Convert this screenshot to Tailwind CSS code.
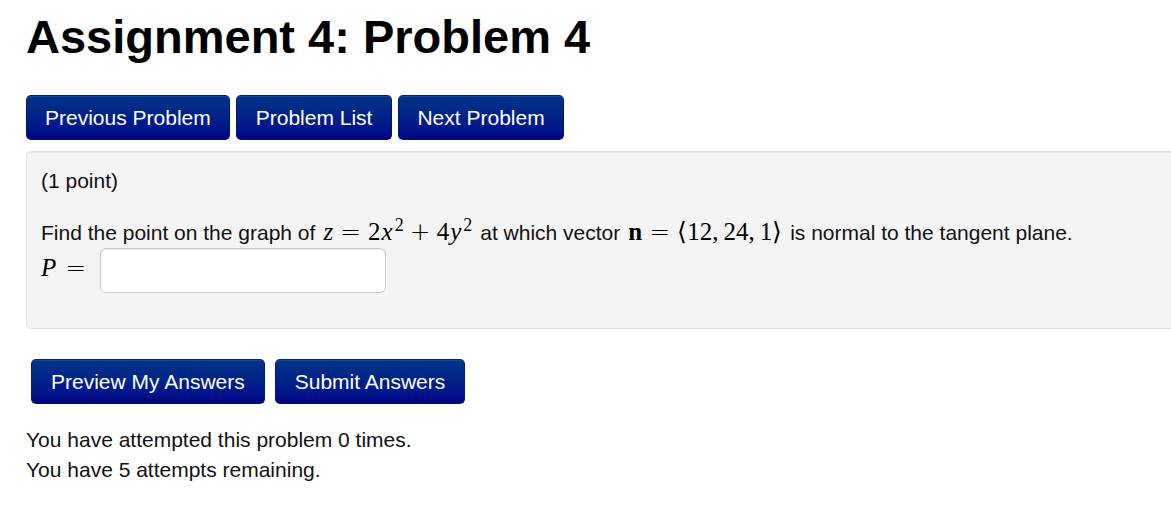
<!DOCTYPE html>
<html lang="en">
<head>
<meta charset="utf-8">
<meta name="viewport" content="width=device-width, initial-scale=1">
<title>Assignment 4: Problem 4</title>
<script src="https://cdn.jsdelivr.net/npm/@tailwindcss/browser@4"></script>
</head>
<body class="bg-white pt-[7px] pl-[26px] font-['Liberation_Sans',Arial,sans-serif] text-[21px] leading-[30px] text-[#111]">
<h1 class="text-[47px] leading-[60px] font-bold text-black">Assignment 4: Problem 4</h1>
<nav class="mt-7 flex flex-wrap gap-[6px]" aria-label="Problems">
<a href="#" class="flex h-[45px] items-center rounded-[5px] border border-[#001a66] border-t-[#00246b] bg-linear-to-b from-[#003388] to-[#000088] px-[18px] text-white inset-shadow-[0_1px_0_#1f4590]">Previous Problem</a>
<a href="#" class="flex h-[45px] items-center rounded-[5px] border border-[#001a66] border-t-[#00246b] bg-linear-to-b from-[#003388] to-[#000088] px-[19px] text-white inset-shadow-[0_1px_0_#1f4590]">Problem List</a>
<a href="#" class="flex h-[45px] items-center rounded-[5px] border border-[#001a66] border-t-[#00246b] bg-linear-to-b from-[#003388] to-[#000088] px-[18px] text-white inset-shadow-[0_1px_0_#1f4590]">Next Problem</a>
</nav>
<form>
<section class="mt-[11px] rounded-l-[5px] border border-r-0 border-[#e1e1e1] bg-[#f4f4f4] px-[14px] pt-[14px] pb-[35px] inset-shadow-[0_1px_1px_#0000000d]">
<p>(1 point)</p>
<div class="mt-[21px] flex flex-wrap items-baseline gap-x-[8px]">
<span>Find the point on the graph of</span>
<span class="flex items-baseline font-['Liberation_Serif',serif] text-[25px] text-black"><i>z</i><span class="mx-[7px] font-['DejaVu_Sans',sans-serif] leading-none font-extralight">=</span>2<i class="mx-px">x</i><sup class="ml-px text-[18px] leading-none">2</sup><span class="mx-[6px] font-['DejaVu_Sans',sans-serif] leading-none font-extralight">+</span>4<i class="mx-px">y</i><sup class="ml-px text-[18px] leading-none">2</sup></span>
<span>at which vector</span>
<span class="flex items-baseline font-['Liberation_Serif',serif] text-[25px] text-black"><b>n</b><span class="mx-[7px] font-['DejaVu_Sans',sans-serif] leading-none font-extralight">=</span><span class="font-['DejaVu_Sans',sans-serif] leading-none font-extralight">⟨</span>12,<span class="ml-[5px]">24,</span><span class="ml-[5px]">1</span><span class="font-['DejaVu_Sans',sans-serif] leading-none font-extralight">⟩</span></span>
<span>is normal to the tangent plane.</span>
</div>
<div class="flex items-start gap-[14px]">
<label for="answer" class="flex items-baseline pt-[5px] font-['Liberation_Serif',serif] text-[25px] text-black"><i>P</i><span class="ml-[9px] font-['DejaVu_Sans',sans-serif] leading-none font-extralight">=</span></label>
<input id="answer" type="text" class="h-[45px] w-[286px] rounded-[6px] border border-[#c8c8c8] bg-white px-2 inset-shadow-[0_1px_1px_#00000013]">
</div>
</section>
<div class="mt-[30px] ml-[5px] flex flex-wrap gap-[10px]">
<button type="button" class="h-[45px] rounded-[5px] border border-[#001a66] border-t-[#00246b] bg-linear-to-b from-[#003388] to-[#000088] px-[19px] text-white inset-shadow-[0_1px_0_#1f4590]">Preview My Answers</button>
<button type="button" class="h-[45px] rounded-[5px] border border-[#001a66] border-t-[#00246b] bg-linear-to-b from-[#003388] to-[#000088] px-[19px] text-white inset-shadow-[0_1px_0_#1f4590]">Submit Answers</button>
</div>
</form>
<p class="mt-[21px]">You have attempted this problem 0 times.<br>You have 5 attempts remaining.</p>
</body>
</html>
